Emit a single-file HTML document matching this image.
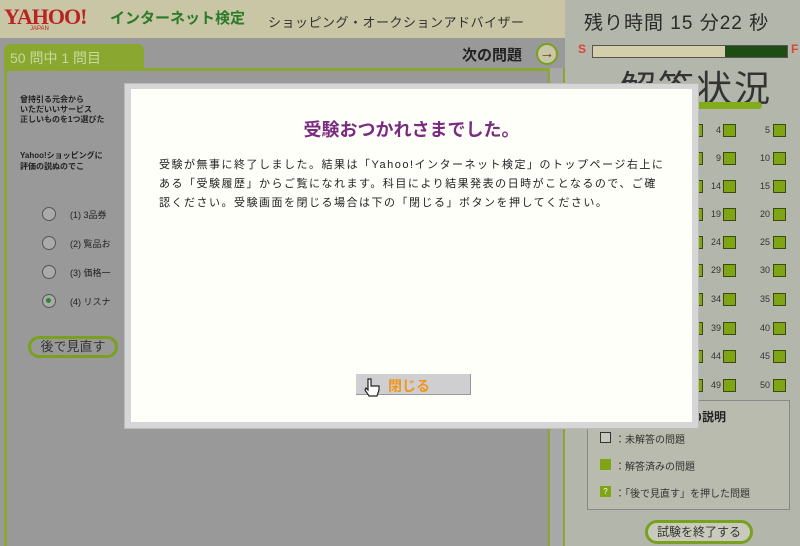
<!DOCTYPE html>
<html><head><meta charset="utf-8"><style>
*{margin:0;padding:0;box-sizing:border-box}
body{width:800px;height:546px;overflow:hidden;position:relative;background:#999;font-family:"Liberation Sans","Noto Sans CJK JP",sans-serif}
.a{position:absolute}
.hdr{left:0;top:0;width:572px;height:38px;background:#c8c6a4}
.rc{left:565px;top:0;width:235px;height:546px;background:#b3b6aa}
.sq{position:absolute;width:13px;height:13px;background:#7fa414;border:1px solid #3b4a10}
.lbl{position:absolute;font-size:9px;color:#333;text-align:right;width:18px}
.rd{position:absolute;left:42px;width:14px;height:14px;border:1.5px solid #555;border-radius:50%;background:#aaa}
.rt{position:absolute;left:70px;font-size:9px;color:#222}
</style></head><body>
<div class="a hdr"></div>
<div class="a" style="left:4px;top:4px;font:bold 22px 'Liberation Serif',serif;color:#b22;letter-spacing:-1px">YAHOO!</div>
<div class="a" style="left:30px;top:26px;font-size:6px;color:#b22">JAPAN</div>
<div class="a" style="left:110px;top:7px;font-size:15px;font-weight:bold;color:#2a7a2a">インターネット検定</div>
<div class="a" style="left:268px;top:12px;font-size:13px;color:#333;letter-spacing:0.5px">ショッピング・オークションアドバイザー</div>
<div class="a rc"></div>
<div class="a" style="left:584px;top:8px;font-size:19px;color:#2a2a2a;letter-spacing:1px">残り時間 15 分22 秒</div>
<div class="a" style="left:578px;top:42px;font-size:12px;font-weight:bold;color:#d43">S</div>
<div class="a" style="left:592px;top:45px;width:196px;height:13px;background:#d4cfaa;border:1px solid #555"></div>
<div class="a" style="left:725px;top:46px;width:62px;height:11px;background:#1d4d12"></div>
<div class="a" style="left:791px;top:42px;font-size:12px;font-weight:bold;color:#d43">F</div>
<div class="a" style="left:620px;top:60px;font-size:36px;color:#333;letter-spacing:2px">解答状況</div>
<div class="a" style="left:690px;top:102px;width:72px;height:7px;background:#82ac1a;border-radius:4px"></div>
<div class="a" style="left:4px;top:44px;width:140px;height:26px;background:#8aa830;border-radius:6px 6px 0 0"></div>
<div class="a" style="left:10px;top:48px;font-size:14px;color:#c8d8a0">50 問中 1 問目</div>
<div class="a" style="left:4px;top:68px;width:548px;height:3px;background:#8aa830"></div>
<div class="a" style="left:4px;top:68px;width:3px;height:478px;background:#8aa830"></div>
<div class="a" style="left:548px;top:68px;width:17px;height:478px;background:#a8a8a8;border-left:2px solid #8aa830;border-right:2px solid #8aa830"></div>
<div class="a" style="left:462px;top:44px;font-size:15px;color:#222;font-weight:bold">次の問題</div>
<div class="a" style="left:536px;top:43px;width:22px;height:22px;border:2px solid #7aa020;border-radius:50%;background:#c8c8a8;font-size:15px;text-align:center;line-height:17px;color:#7a3a10;font-weight:bold">→</div>
<div class="a" style="left:20px;top:95px;font-size:8px;color:#222;font-weight:bold;line-height:10px">曾持引る元会から<br>いただいいサービス<br>正しいものを1つ選びた</div>
<div class="a" style="left:20px;top:150px;font-size:8px;color:#222;font-weight:bold;line-height:11px">Yahoo!ショッピングに<br>評価の説ぬのでこ</div>
<div class="rd" style="top:207px"></div><div class="rt" style="top:208px">(1) 3品券</div>
<div class="rd" style="top:236px"></div><div class="rt" style="top:237px">(2) 覧品お</div>
<div class="rd" style="top:265px"></div><div class="rt" style="top:266px">(3) 価格一</div>
<div class="rd" style="top:294px"><div style="width:5px;height:5px;background:#2a8a2a;border-radius:50%;margin:3px"></div></div><div class="rt" style="top:295px">(4) リスナ</div>
<div class="a" style="left:28px;top:336px;width:90px;height:22px;border:3px solid #7aa020;border-radius:11px;font-size:13px;color:#333;text-align:center;line-height:16px">後で見直す</div>
<div id="g"></div>
<div class="a" style="left:587px;top:400px;width:203px;height:110px;border:1px solid #888;background:#b8bbae"></div>
<div class="a" style="left:690px;top:408px;font-size:12px;color:#222;font-weight:bold">の説明</div>
<div class="a" style="left:600px;top:432px;width:11px;height:11px;border:1px solid #333;background:#c8c8c0"></div>
<div class="a" style="left:615px;top:431px;font-size:10px;color:#333">：未解答の問題</div>
<div class="a" style="left:600px;top:459px;width:11px;height:11px;background:#7fa414"></div>
<div class="a" style="left:615px;top:458px;font-size:10px;color:#333">：解答済みの問題</div>
<div class="a" style="left:600px;top:486px;width:11px;height:11px;background:#7fa414;font-size:8px;color:#fff;text-align:center;line-height:11px">?</div>
<div class="a" style="left:615px;top:485px;font-size:10px;color:#333">：「後で見直す」を押した問題</div>
<div class="a" style="left:645px;top:520px;width:108px;height:24px;border:3px solid #7aa020;border-radius:12px;background:#c8cbbc;font-size:12px;color:#333;text-align:center;line-height:18px">試験を終了する</div>
<div class="a" style="left:124px;top:83px;width:575px;height:346px;background:#d6d6d6;border:1px solid #bbb"></div>
<div class="a" style="left:131px;top:89px;width:561px;height:333px;background:#fffffa"></div>
<div class="a" style="left:131px;top:116px;width:561px;text-align:center;font-size:18px;font-weight:bold;color:#7a2b80">受験おつかれさまでした。</div>
<div class="a" style="left:159px;top:156px;font-size:11px;line-height:19px;color:#222;white-space:nowrap;letter-spacing:1.5px">受験が無事に終了しました。結果は「Yahoo!インターネット検定」のトップページ右上に<br>ある「受験履歴」からご覧になれます。科目により結果発表の日時がことなるので、ご確<br>認ください。受験画面を閉じる場合は下の「閉じる」ボタンを押してください。</div>
<div class="a" style="left:356px;top:374px;width:115px;height:21px;background:#cfcfd2;border-right:1px solid #999;border-bottom:1px solid #999"></div>
<div class="a" style="left:388px;top:376px;font-size:14px;font-weight:bold;color:#f0961e">閉じる</div>
<svg class="a" style="left:364px;top:378px" width="16" height="22" viewBox="0 0 16 22"><path d="M4 1v11l-2-2-1 2 4 6h8l2-6v-4h-8V1z" fill="#fff" stroke="#222" stroke-width="1.2"/></svg>
<script>
var g=document.getElementById('g'),h='',ys=[130,158,186,214,242,270,299,328,356,385];
for(var r=0;r<10;r++){var y=ys[r];
h+='<div class="sq" style="left:698px;top:'+(y-6)+'px;width:5px"></div>';
h+='<div class="lbl" style="left:703px;top:'+(y-5)+'px">'+(r*5+4)+'</div><div class="sq" style="left:723px;top:'+(y-6)+'px"></div>';
h+='<div class="lbl" style="left:752px;top:'+(y-5)+'px">'+(r*5+5)+'</div><div class="sq" style="left:773px;top:'+(y-6)+'px"></div>';}
g.innerHTML=h;
</script>
</body></html>
